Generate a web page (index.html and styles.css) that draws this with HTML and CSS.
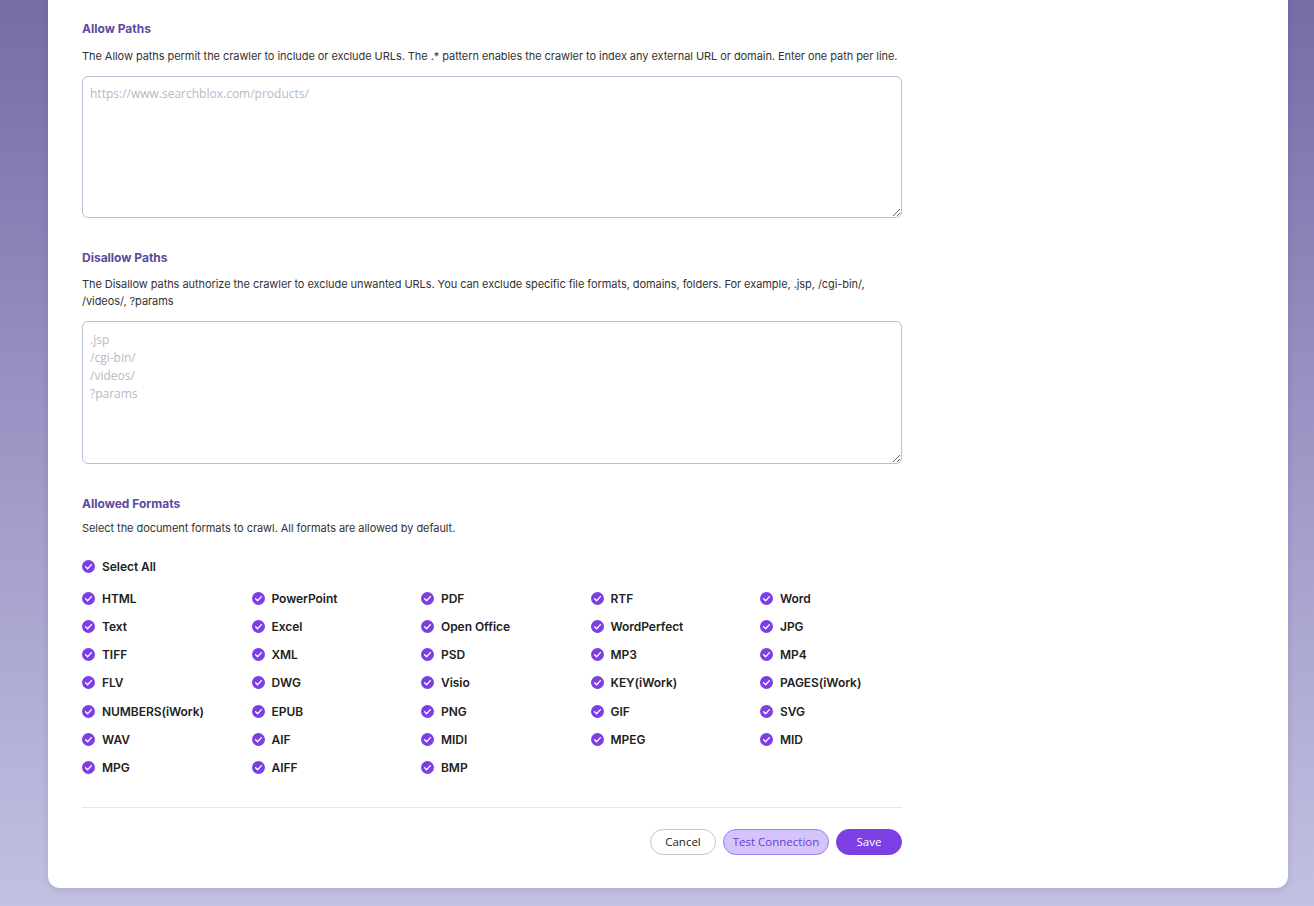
FILE: index.html
```html
<!DOCTYPE html>
<html lang="en">
<head>
    <meta charset="UTF-8">
    <meta name="viewport" content="width=device-width, initial-scale=1.0">
    <title>Crawler Settings</title>
    <link rel="stylesheet" href="styles.css">
</head>
<body>
    <div class="page">
        <div class="card">
            <div class="section">
                <h2 class="section-title">Allow Paths</h2>
                <p class="section-desc">The Allow paths permit the crawler to include or exclude URLs. The .* pattern enables the crawler to index any external URL or domain. Enter one path per line.</p>
                <textarea class="paths allow" placeholder="https://www.searchblox.com/products/"></textarea>
            </div>

            <div class="section">
                <h2 class="section-title">Disallow Paths</h2>
                <p class="section-desc">The Disallow paths authorize the crawler to exclude unwanted URLs. You can exclude specific file formats, domains, folders. For example, .jsp, /cgi-bin/,<br>/videos/, ?params</p>
                <textarea class="paths disallow" placeholder=".jsp&#10;/cgi-bin/&#10;/videos/&#10;?params"></textarea>
            </div>

            <div class="section formats">
                <h2 class="section-title">Allowed Formats</h2>
                <p class="section-desc tight">Select the document formats to crawl. All formats are allowed by default.</p>

                <label class="check select-all"><span class="box"></span>Select All</label>

                <div class="format-grid" id="format-grid"></div>
            </div>

            <div class="actions">
                <button class="btn btn-cancel">Cancel</button>
                <button class="btn btn-test">Test Connection</button>
                <button class="btn btn-save">Save</button>
            </div>
        </div>
    </div>

    <script>
        // Build the format checkboxes
        const formats = [
            'HTML', 'PowerPoint', 'PDF', 'RTF', 'Word',
            'Text', 'Excel', 'Open Office', 'WordPerfect', 'JPG',
            'TIFF', 'XML', 'PSD', 'MP3', 'MP4',
            'FLV', 'DWG', 'Visio', 'KEY(iWork)', 'PAGES(iWork)',
            'NUMBERS(iWork)', 'EPUB', 'PNG', 'GIF', 'SVG',
            'WAV', 'AIF', 'MIDI', 'MPEG', 'MID',
            'MPG', 'AIFF', 'BMP'
        ];

        const tick = '<svg width="13" height="13" viewBox="0 0 13 13"><circle cx="6.5" cy="6.5" r="6.5" fill="#7b3fe4"/><path d="M3.6 6.7 L5.6 8.7 L9.4 4.6" fill="none" stroke="#fff" stroke-width="1.3" stroke-linecap="round" stroke-linejoin="round"/></svg>';

        document.querySelectorAll('.box').forEach(b => b.innerHTML = tick);

        const grid = document.getElementById('format-grid');
        formats.forEach(name => {
            const item = document.createElement('label');
            item.className = 'check';
            item.innerHTML = '<span class="box">' + tick + '</span>' + name;
            grid.appendChild(item);
        });
    </script>
</body>
</html>
```

FILE: styles.css
```css
* {
    margin: 0;
    padding: 0;
    box-sizing: border-box;
}

html, body {
    height: 100%;
}

body {
    font-family: 'Inter', 'Liberation Sans', sans-serif;
    background: linear-gradient(180deg, #776ca6 0%, #9d97c6 50%, #c1c1e1 100%);
    color: #333;
    overflow: hidden;
}

.page {
    padding: 0 26px 0 48px;
}

.card {
    background: #ffffff;
    border-radius: 0 0 12px 12px;
    padding: 21px 34px 33px 34px;
    box-shadow: 0 2px 6px rgba(60, 50, 110, 0.15);
}

.section {
    width: 820px;
    margin-bottom: 32px;
}

.section-title {
    font-size: 12px;
    line-height: 16px;
    font-weight: 700;
    color: #5b4a9e;
    margin-bottom: 10.5px;
}

.section-desc {
    width: 850px;
    font-size: 11px;
    line-height: 17px;
    letter-spacing: -0.06px;
    color: #333;
    margin-bottom: 11px;
}

.section-desc.tight {
    margin-top: -3px;
    margin-bottom: 19.5px;
}

.paths {
    display: block;
    width: 100%;
    height: 142px;
    border: 1px solid #b9bfd2;
    border-radius: 6px;
    padding: 8px 7px 6px 7px;
    font-family: 'Open Sans', 'Noto Sans', sans-serif;
    font-size: 12px;
    line-height: 18px;
    color: #333;
    resize: vertical;
    outline: none;
}

.paths.disallow {
    height: 143px;
    padding-top: 9px;
}

.paths::placeholder {
    color: #b5b9c8;
}

.formats {
    margin-bottom: 29px;
}

.check {
    display: flex;
    align-items: center;
    gap: 7px;
    height: 20px;
    font-size: 12px;
    font-weight: 600;
    letter-spacing: -0.05px;
    color: #222;
    white-space: nowrap;
}

.box {
    display: flex;
    width: 13px;
    height: 13px;
}

.select-all {
    margin-bottom: 12px;
}

.format-grid {
    display: grid;
    grid-template-columns: repeat(5, 169.5px);
    row-gap: 8.33px;
}

.actions {
    width: 820px;
    border-top: 1px solid #e6e6ea;
    padding-top: 21px;
    display: flex;
    justify-content: flex-end;
    gap: 7px;
}

.btn {
    height: 26px;
    border-radius: 13px;
    font-family: 'Open Sans', 'Noto Sans', sans-serif;
    font-size: 11.5px;
    cursor: pointer;
}

.btn-cancel {
    width: 66px;
    background: #ffffff;
    border: 1px solid #c3c7d6;
    color: #222;
}

.btn-test {
    width: 106px;
    background: #d5c3fb;
    border: 1px solid #a47bf2;
    color: #6a3ed6;
}

.btn-save {
    width: 66px;
    background: #7b3fe4;
    border: 1px solid #7b3fe4;
    color: #ffffff;
}
```
